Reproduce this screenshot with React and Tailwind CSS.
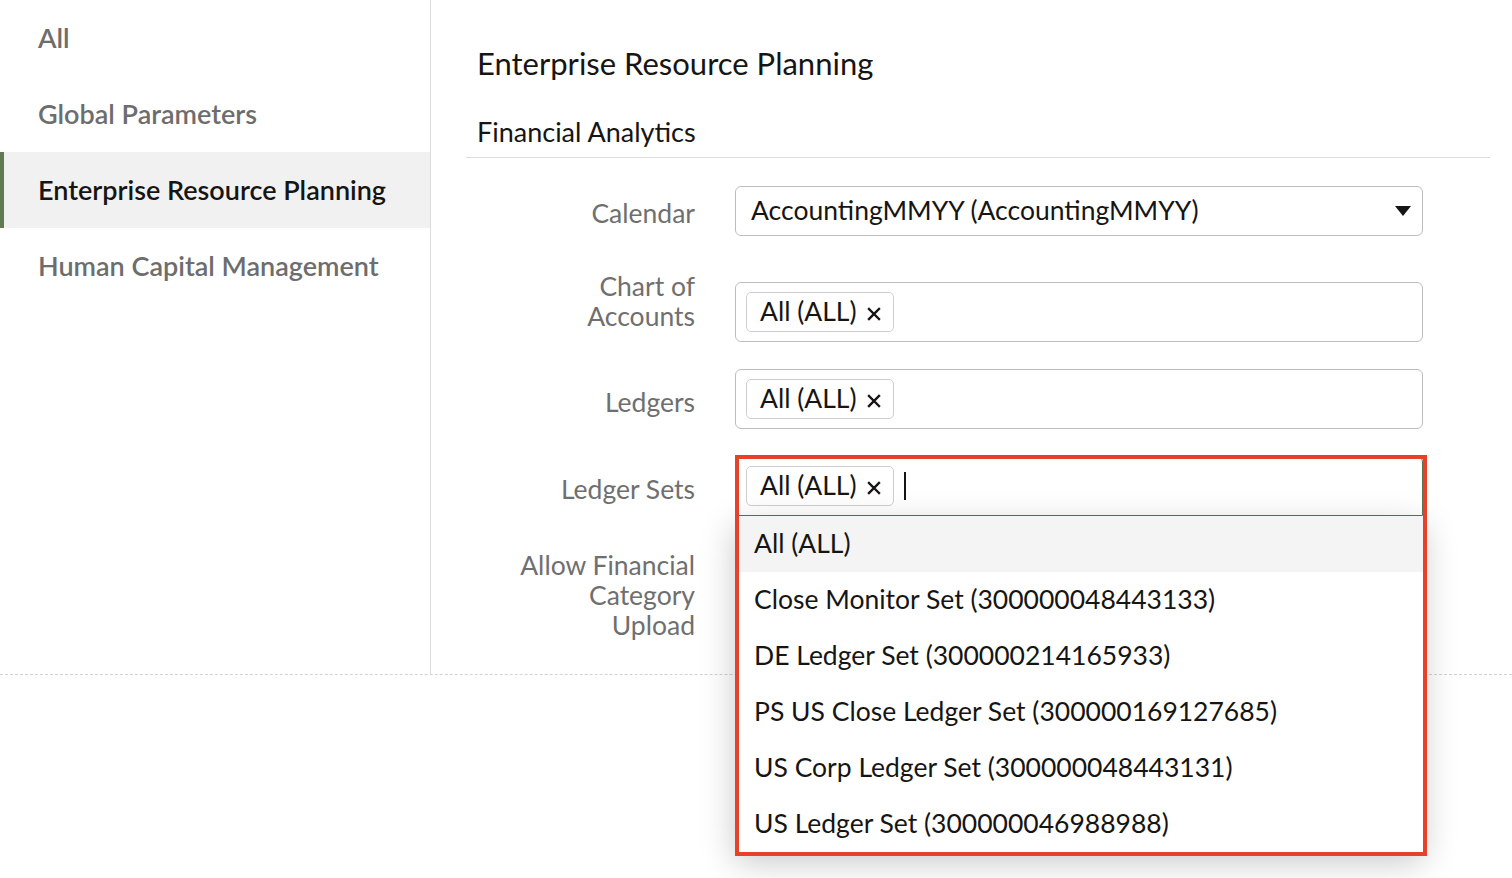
import React from "react";

const sideItems = [
  { label: "All" },
  { label: "Global Parameters" },
  { label: "Enterprise Resource Planning", active: true },
  { label: "Human Capital Management" },
];

const options = [
  "All (ALL)",
  "Close Monitor Set (300000048443133)",
  "DE Ledger Set (300000214165933)",
  "PS US Close Ledger Set (300000169127685)",
  "US Corp Ledger Set (300000048443131)",
  "US Ledger Set (300000046988988)",
];

function Chip() {
  return (
    <span className="inline-flex items-center h-[40px] pl-[13px] pr-[12px] border border-[#cfcfcf] rounded-[5px] text-[26.5px] text-[#161513] gap-[10px]">
      All (ALL)
      <svg width="14" height="14" viewBox="0 0 14 14" className="mt-[3px]">
        <path d="M2 2 L12 12 M12 2 L2 12" stroke="#161513" strokeWidth="2.4" strokeLinecap="square" />
      </svg>
    </span>
  );
}

function Label({ children, className = "" }) {
  return (
    <div className={"w-[229px] shrink-0 text-right text-[26.5px] leading-[30px] text-[#6f6f6f] " + className}>
      {children}
    </div>
  );
}

export default function App() {
  return (
    <div className="min-h-screen bg-white text-[#161513]" style={{ fontFamily: "Lato, 'Open Sans', sans-serif" }}>
      <div className="flex h-[675px] border-b border-dashed border-[#d2d2d2]">
        {/* Sidebar */}
        <nav className="w-[431px] shrink-0 border-r border-[#dcdcdc]">
          {sideItems.map((item) => (
            <div
              key={item.label}
              className={
                item.active
                  ? "h-[76px] flex items-center pl-[34px] bg-[#f1f1f1] border-l-4 border-[#617a51] text-[#161513] text-[27px] font-semibold"
                  : "h-[76px] flex items-center pl-[38px] text-[#6d6d6d] text-[27px] font-semibold"
              }
            >
              {item.label}
            </div>
          ))}
        </nav>

        {/* Main */}
        <main className="flex-1 pl-[35px] pr-[22px]">
          <h1 className="pl-[11px] pt-[46px] text-[31px] leading-[34px] font-normal">
            Enterprise Resource Planning
          </h1>
          <h2 className="pl-[11px] mt-[37px] pb-[10px] text-[27px] leading-[30px] font-normal border-b border-[#dedede]">
            Financial Analytics
          </h2>

          {/* Calendar */}
          <div className="flex gap-[40px] mt-[28px]">
            <Label className="pt-[12px]">Calendar</Label>
            <div className="w-[688px] h-[50px] border border-[#bdbdbd] rounded-[6px] flex items-center pl-[15px] pr-[11px] justify-between">
              <span className="text-[26.5px]">AccountingMMYY (AccountingMMYY)</span>
              <svg width="16" height="10" viewBox="0 0 16 10">
                <path d="M0 0 H16 L8 10 Z" fill="#161513" />
              </svg>
            </div>
          </div>

          {/* Chart of Accounts */}
          <div className="flex gap-[40px] mt-[35px]">
            <Label>Chart of<br />Accounts</Label>
            <div className="w-[688px] h-[60px] mt-[11px] border border-[#bdbdbd] rounded-[6px] flex items-center pl-[10px]">
              <Chip />
            </div>
          </div>

          {/* Ledgers */}
          <div className="flex gap-[40px] mt-[27px]">
            <Label className="pt-[18px]">Ledgers</Label>
            <div className="w-[688px] h-[60px] border border-[#bdbdbd] rounded-[6px] flex items-center pl-[10px]">
              <Chip />
            </div>
          </div>

          {/* Ledger Sets */}
          <div className="flex gap-[40px] mt-[27px]">
            <Label className="pt-[18px]">Ledger Sets</Label>
            <div className="relative w-[688px]">
              <div className="h-[60px] border border-[#5c7350] rounded-t-[6px] flex items-center pl-[10px] gap-[10px]">
                <Chip />
                <span className="w-[2px] h-[28px] bg-[#161513]" />
              </div>
              <ul className="absolute left-0 top-full w-full bg-white shadow-[0_10px_32px_rgba(0,0,0,0.22)] z-10">
                {options.map((o, i) => (
                  <li
                    key={o}
                    className={
                      (i === 0 ? "bg-[#f4f4f4] " : "") +
                      "h-[56px] flex items-center pl-[19px] text-[26.5px] text-[#161513]"
                    }
                  >
                    {o}
                  </li>
                ))}
              </ul>
              <div className="absolute left-0 top-[-1px] w-[692px] h-[401px] border-4 border-[#e8412b] pointer-events-none z-20" />
            </div>
          </div>

          {/* Allow Financial Category Upload */}
          <div className="flex gap-[40px] mt-[34px]">
            <Label>Allow Financial<br />Category<br />Upload</Label>
          </div>
        </main>
      </div>
    </div>
  );
}
